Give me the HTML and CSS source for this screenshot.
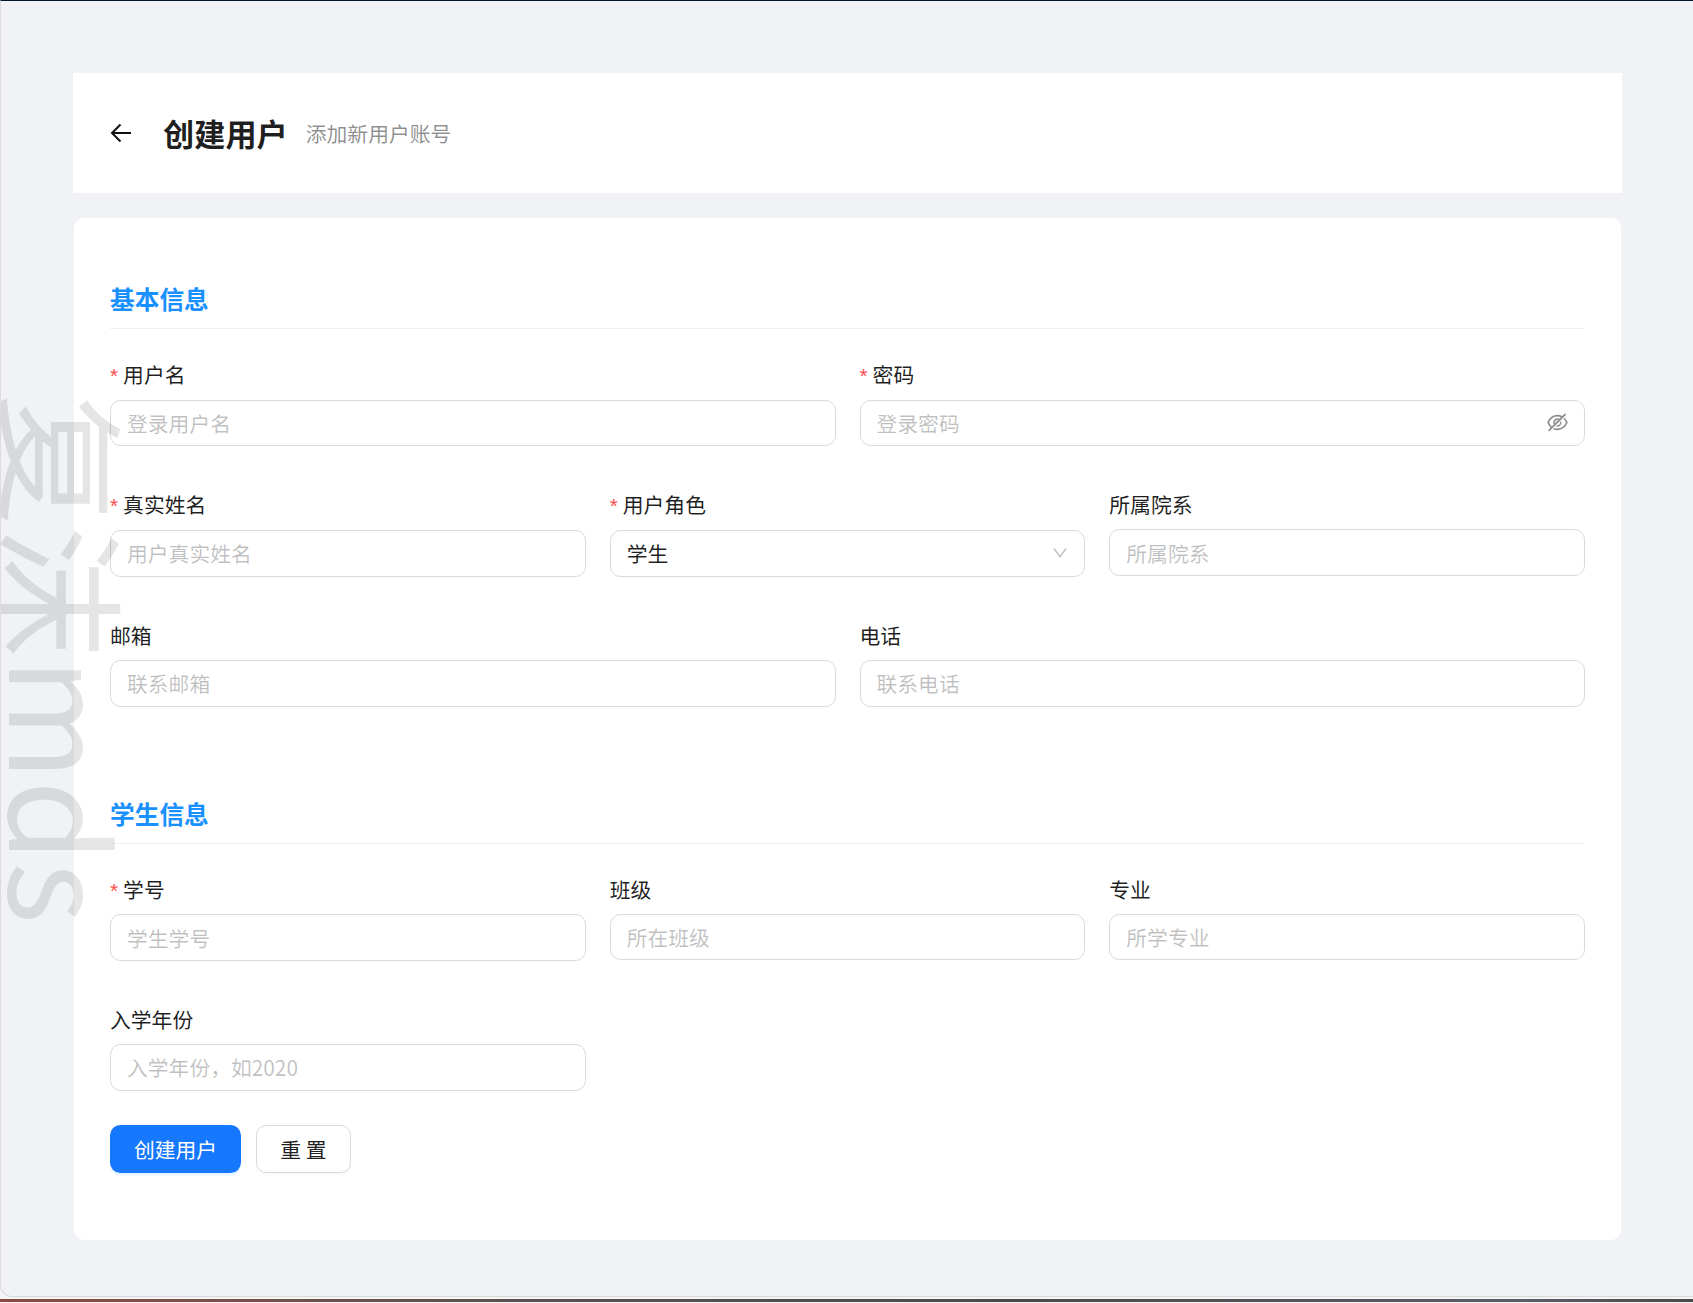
FILE: index.html
```html
<!DOCTYPE html>
<html lang="zh-CN">
<head>
<meta charset="utf-8">
<title>创建用户</title>
<link rel="stylesheet" href="styles.css">
</head>
<body>
<div class="window">
  <main class="page">
    <header class="page-header">
      <svg class="back-icon" viewBox="0 0 22 20" aria-hidden="true"><path d="M21 10H2M10.500 1.500 2 10l8.500 8.500"/></svg>
      <h1 class="page-title">创建用户</h1>
      <span class="page-sub">添加新用户账号</span>
    </header>
    <section class="card">
      <h2 class="section-title">基本信息</h2>
      <div class="row row-2">
        <div class="item"><label class="label required">用户名</label><input class="input" placeholder="登录用户名"></div>
        <div class="item"><label class="label required">密码</label>
          <div class="input input-affix"><input class="inner" placeholder="登录密码">
            <svg class="eye-icon" viewBox="64 64 896 896" aria-hidden="true"><path d="M942.200 486.200Q889.470 375.110 816.700 305l-50.880 50.880C807.310 395.530 843.450 447.400 874.700 512 791.500 684.200 673.400 766 512 766q-72.670 0-133.870-22.380L323 798.750Q408 838 512 838q288.300 0 430.200-300.300a60.290 60.290 0 000-51.500zm-63.570-320.640L836 122.880a8 8 0 00-11.320 0L715.310 232.200Q624.860 186 512 186q-288.300 0-430.200 300.300a60.300 60.300 0 000 51.500q56.690 119.400 136.500 191.410L112.480 835a8 8 0 000 11.310L155.170 889a8 8 0 0011.310 0l712.150-712.120a8 8 0 000-11.320zM149.300 512C232.600 339.800 350.700 258 512 258c54.540 0 104.130 9.360 149.120 28.390l-70.300 70.300a176 176 0 00-238.130 238.130l-83.420 83.420C223.100 637.490 183.300 582.280 149.300 512zm246.700 0a112.110 112.110 0 01146.200-106.690L401.310 546.200A112 112 0 01396 512z"/><path d="M508 624c-3.460 0-6.870-.16-10.250-.47l-52.820 52.820a176.090 176.090 0 00227.420-227.420l-52.820 52.820c.31 3.380.47 6.790.47 10.250a111.940 111.940 0 01-112 112z"/></svg>
          </div>
        </div>
      </div>
      <div class="row row-3">
        <div class="item"><label class="label required">真实姓名</label><input class="input" placeholder="用户真实姓名"></div>
        <div class="item"><label class="label required">用户角色</label>
          <div class="input select"><span>学生</span>
            <svg class="down-icon" viewBox="64 64 896 896" aria-hidden="true"><path d="M884 256h-75c-5.100 0-9.900 2.500-12.900 6.600L512 654.200 227.900 262.600c-3-4.100-7.800-6.600-12.900-6.600h-75c-6.500 0-10.300 7.400-6.500 12.700l352.600 486.100c12.800 17.600 39 17.600 51.700 0l352.600-486.100c3.900-5.300.1-12.700-6.400-12.700z"/></svg>
          </div>
        </div>
        <div class="item"><label class="label">所属院系</label><input class="input" placeholder="所属院系"></div>
      </div>
      <div class="row row-2">
        <div class="item"><label class="label">邮箱</label><input class="input" placeholder="联系邮箱"></div>
        <div class="item"><label class="label">电话</label><input class="input" placeholder="联系电话"></div>
      </div>
      <h2 class="section-title section-next">学生信息</h2>
      <div class="row row-3">
        <div class="item"><label class="label required">学号</label><input class="input" placeholder="学生学号"></div>
        <div class="item"><label class="label">班级</label><input class="input" placeholder="所在班级"></div>
        <div class="item"><label class="label">专业</label><input class="input" placeholder="所学专业"></div>
      </div>
      <div class="row row-3">
        <div class="item"><label class="label">入学年份</label><input class="input" placeholder="入学年份，如2020"></div>
      </div>
      <div class="actions">
        <button class="btn btn-primary" type="button">创建用户</button>
        <button class="btn btn-default" type="button">重 置</button>
      </div>
    </section>
  </main>
  <div class="watermark" aria-hidden="true">复沫mds</div>
</div>
<div class="wallpaper"></div>
</body>
</html>
```

FILE: styles.css
```css
* { box-sizing: border-box; }
html, body { margin: 0; padding: 0; }
body {
  height: 1303px;
  overflow: hidden;
  background: #f5f5f5;
  font-family: "Noto Sans CJK SC", "Liberation Sans", sans-serif;
  font-size: 20.8px;
  color: rgba(0, 0, 0, 0.88);
}
.window {
  position: relative;
  height: 1297px;
  background: #f0f2f5;
  border-top: 1px solid #001529;
  border-left: 1px solid #dcdcdc;
  border-bottom: 1px solid #d9d9d9;
  border-bottom-left-radius: 12px;
  overflow: hidden;
}
.page { padding: 72px 71px 0 72px; }
.page-header {
  display: flex;
  align-items: center;
  height: 120px;
  padding: 0 37px;
  background: #fff;
}
.back-icon {
  width: 22px;
  height: 20px;
  margin-right: 31px;
  flex: none;
  fill: none;
  stroke: #111;
  stroke-width: 2;
}
.page-title {
  margin: 0 18px 0 0;
  font-size: 31.2px;
  font-weight: 700;
  line-height: 40px;
}
.page-sub { color: rgba(0, 0, 0, 0.45); }
.card {
  height: 1024px;
  margin-top: 24px;
  padding: 62px 36px 0;
  background: #fff;
  border: 1px solid #f0f2f5;
  border-radius: 11px;
}
.section-title {
  margin: 0 0 31px;
  padding-bottom: 12px;
  border-bottom: 1px solid #f0f0f0;
  font-size: 24.7px;
  font-weight: 700;
  line-height: 36px;
  color: #1890ff;
}
.section-next { margin-top: 44px; }
.row { display: grid; gap: 24px; }
.row-2 { grid-template-columns: repeat(2, 1fr); }
.row-3 { grid-template-columns: repeat(3, 1fr); }
.item { display: flex; flex-direction: column; margin-bottom: 44px; min-width: 0; }
.label {
  display: block;
  height: 28.6px;
  margin-bottom: 10.4px;
  line-height: 28.6px;
}
.label.required { margin-bottom: 11px; }
.label.required::before {
  content: "*";
  margin-right: 5px;
  color: #ff4d4f;
  font-family: "Liberation Sans", sans-serif;
}
.input {
  display: block;
  width: 100%;
  height: 46.8px;
  padding: 0 16px;
  border: 1px solid #d9d9d9;
  border-radius: 10.4px;
  background: #fff;
  font: inherit;
  color: inherit;
  outline: none;
}
.input::placeholder, .inner::placeholder { color: rgba(0, 0, 0, 0.25); opacity: 1; }
.input-affix, .select { display: flex; align-items: center; justify-content: space-between; }
.inner {
  flex: 1;
  min-width: 0;
  padding: 0;
  border: 0;
  background: transparent;
  font: inherit;
  outline: none;
}
.eye-icon { width: 21px; height: 21px; flex: none; fill: rgba(0, 0, 0, 0.45); }
.down-icon { width: 16px; height: 16px; flex: none; fill: rgba(0, 0, 0, 0.25); }
.actions { display: flex; gap: 15px; margin-top: -10px; }
.btn {
  height: 48px;
  border-radius: 10.4px;
  font: inherit;
}
.btn-primary {
  width: 131px;
  border: 0;
  background: #1677ff;
  color: #fff;
  box-shadow: 0 2.6px 0 rgba(5, 145, 255, 0.1);
}
.btn-default {
  width: 95px;
  border: 1px solid #d9d9d9;
  background: #fff;
  color: rgba(0, 0, 0, 0.88);
  box-shadow: 0 2.6px 0 rgba(0, 0, 0, 0.02);
}
.watermark {
  position: absolute;
  left: -1px;
  top: 393px;
  writing-mode: vertical-rl;
  text-orientation: sideways;
  font-family: "Noto Sans CJK SC", "Liberation Sans", sans-serif;
  font-size: 132px;
  font-weight: 400;
  line-height: 1;
  color: rgba(0, 0, 0, 0.1);
  white-space: nowrap;
  pointer-events: none;
}
.wallpaper {
  height: 3px;
  margin-top: 2px;
  background: linear-gradient(90deg, #8a4a42 0%, #7d5048 10%, #5a5250 30%, #4a4a4c 60%, #5a5e66 90%, #4a4a4a 100%);
}
```
